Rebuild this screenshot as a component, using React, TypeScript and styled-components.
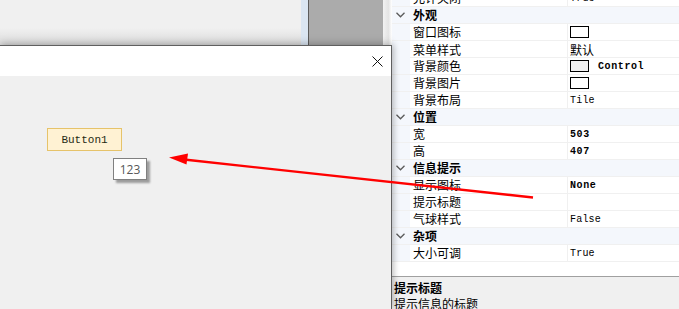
import React from "react";
import styled, { createGlobalStyle } from "styled-components";

const Global = createGlobalStyle`
  html, body { margin: 0; padding: 0; background: #f0f0f0; }
  body { font-family: "Noto Sans CJK SC", "Liberation Sans", sans-serif; }
  #root { width: 679px; height: 309px; }
`;

const Page = styled.div`
  position: relative;
  width: 679px;
  height: 309px;
  overflow: hidden;
  display: flex;
  background: #f0f0f0;
`;

const LeftArea = styled.div`
  width: 392px;
  flex: none;
  display: flex;
  flex-direction: column;
  position: relative;
  z-index: 1;
`;

const Backdrop = styled.div`
  height: 45px;
  flex: none;
  display: flex;
`;

const BackPane = styled.div<{ $w: number; $bg: string; $edge?: string }>`
  width: ${(p) => p.$w}px;
  flex: none;
  background: ${(p) => p.$bg};
  border-left: ${(p) => (p.$edge ? `1px solid ${p.$edge}` : "none")};
  box-sizing: border-box;
`;

const Dialog = styled.div`
  flex: 1;
  display: flex;
  flex-direction: column;
  border-top: 1px solid #5f5f5f;
  border-right: 1px solid #5f5f5f;
  box-shadow: 2px 0 6px rgba(0, 0, 0, 0.18), 0 -3px 8px rgba(0, 0, 0, 0.12);
  background: #f0f0f0;
`;

const TitleBar = styled.div`
  height: 30px;
  flex: none;
  background: #ffffff;
  display: flex;
  align-items: center;
  justify-content: flex-end;
  padding-right: 8px;
`;

const CloseButton = styled.div`
  width: 12px;
  height: 12px;
  display: flex;
  align-items: center;
  justify-content: center;
`;

const Canvas = styled.div`
  flex: 1;
  position: relative;
  background: #f0f0f0;
`;

const DesignButton = styled.div`
  position: absolute;
  left: 47px;
  top: 52px;
  width: 75px;
  height: 23px;
  box-sizing: border-box;
  background: #fff2d3;
  border: 1px solid #e6c36a;
  display: flex;
  align-items: center;
  justify-content: center;
  font-family: "Liberation Mono", monospace;
  font-size: 11px;
  color: #1f2a14;
`;

const Tip = styled.div`
  position: absolute;
  left: 113px;
  top: 82px;
  width: 34px;
  height: 22px;
  box-sizing: border-box;
  background: #ffffff;
  border: 1px solid #808080;
  box-shadow: 3px 3px 2px rgba(0, 0, 0, 0.35);
  display: flex;
  align-items: center;
  justify-content: center;
  font-family: "Open Sans", "Liberation Sans", sans-serif;
  font-size: 12px;
  color: #575757;
`;

const Grid = styled.div`
  flex: 1;
  display: flex;
  flex-direction: column;
  background: #ffffff;
  min-width: 0;
`;

const List = styled.div`
  flex: 1;
  display: flex;
  flex-direction: column;
  margin-top: -10px;
  background: #ffffff;
`;

const Row = styled.div<{ $cat?: boolean }>`
  height: 17px;
  flex: none;
  display: grid;
  grid-template-columns: 18px 158px 1fr;
  box-sizing: border-box;
  background: ${(p) => (p.$cat ? "#f4f7fc" : "#ffffff")};
  border-bottom: 1px solid #f0f0f0;
`;

const Gutter = styled.div`
  background: #f4f7fc;
  display: flex;
  align-items: center;
  padding-left: 4px;
`;

const NameCell = styled.div<{ $cat?: boolean }>`
  grid-column: ${(p) => (p.$cat ? "2 / 4" : "auto")};
  display: flex;
  align-items: center;
  padding-left: 3px;
  font-size: 12px;
  line-height: 16px;
  font-weight: ${(p) => (p.$cat ? 700 : 400)};
  color: #000;
  white-space: nowrap;
  border-right: ${(p) => (p.$cat ? "none" : "1px solid #f0f0f0")};
`;

const ValueCell = styled.div<{ $bold?: boolean }>`
  display: flex;
  align-items: center;
  gap: 9px;
  padding-left: 2px;
  font-family: "Liberation Mono", "Noto Sans CJK SC", monospace;
  font-size: 10px;
  font-weight: ${(p) => (p.$bold ? 700 : 400)};
  letter-spacing: ${(p) => (p.$bold ? "0.6px" : "0.2px")};
  color: #000;
  white-space: nowrap;
`;

const CjkValue = styled.span`
  font-family: "Noto Sans CJK SC", sans-serif;
  font-size: 12px;
  letter-spacing: 0;
`;

const Swatch = styled.span<{ $fill: string }>`
  width: 19px;
  height: 12px;
  box-sizing: border-box;
  border: 1px solid #000;
  background: ${(p) => p.$fill};
  flex: none;
`;

const Help = styled.div`
  height: 33px;
  flex: none;
  box-sizing: border-box;
  border-top: 1px solid #a0a0a0;
  background: #f0f0f0;
  padding: 3px 0 0 2px;
  display: flex;
  flex-direction: column;
  font-size: 12px;
  line-height: 16px;
  color: #000;
`;

const HelpTitle = styled.div`
  font-weight: 700;
`;

const Overlay = styled.svg`
  position: absolute;
  left: 0;
  top: 0;
  width: 679px;
  height: 309px;
  pointer-events: none;
  z-index: 5;
`;

type Item =
  | { kind: "cat"; name: string }
  | {
      kind: "item";
      name: string;
      value?: string;
      bold?: boolean;
      swatch?: string;
      cjk?: boolean;
    };

const rows: Item[] = [
  { kind: "item", name: "允许关闭", value: "True" },
  { kind: "cat", name: "外观" },
  { kind: "item", name: "窗口图标", swatch: "#ffffff" },
  { kind: "item", name: "菜单样式", value: "默认", cjk: true },
  { kind: "item", name: "背景颜色", swatch: "#f0f0f0", value: "Control", bold: true },
  { kind: "item", name: "背景图片", swatch: "#ffffff" },
  { kind: "item", name: "背景布局", value: "Tile" },
  { kind: "cat", name: "位置" },
  { kind: "item", name: "宽", value: "503", bold: true },
  { kind: "item", name: "高", value: "407", bold: true },
  { kind: "cat", name: "信息提示" },
  { kind: "item", name: "显示图标", value: "None", bold: true },
  { kind: "item", name: "提示标题", value: "" },
  { kind: "item", name: "气球样式", value: "False" },
  { kind: "cat", name: "杂项" },
  { kind: "item", name: "大小可调", value: "True" },
];

const Chevron = () => (
  <svg width="9" height="6" viewBox="0 0 9 6">
    <path d="M0.5 0.8 L4.5 4.8 L8.5 0.8" fill="none" stroke="#5a5a5a" strokeWidth="1.3" />
  </svg>
);

export default function App() {
  return (
    <>
      <Global />
      <Page>
        <LeftArea>
          <Backdrop>
            <BackPane
              $w={301}
              $bg="linear-gradient(to bottom, #f0f0f0 0%, #f0f0f0 62%, #dcdcdc 100%)"
            />
            <BackPane $w={7} $bg="#dbe6f2" />
            <BackPane $w={75} $bg="#ababab" $edge="#5c5c5c" />
            <BackPane
              $w={9}
              $bg="linear-gradient(to right, #f2f2f2 0%, #e4e4e4 60%, #ffffff 100%)"
            />
          </Backdrop>
          <Dialog>
            <TitleBar>
              <CloseButton>
                <svg width="11" height="11" viewBox="0 0 11 11">
                  <path d="M0.5 0.5 L10.5 10.5 M10.5 0.5 L0.5 10.5" stroke="#111" strokeWidth="1" fill="none" />
                </svg>
              </CloseButton>
            </TitleBar>
            <Canvas>
              <DesignButton>Button1</DesignButton>
              <Tip>123</Tip>
            </Canvas>
          </Dialog>
        </LeftArea>
        <Grid>
          <List>
            {rows.map((r, i) =>
              r.kind === "cat" ? (
                <Row key={i} $cat>
                  <Gutter>
                    <Chevron />
                  </Gutter>
                  <NameCell $cat>{r.name}</NameCell>
                </Row>
              ) : (
                <Row key={i}>
                  <Gutter />
                  <NameCell>{r.name}</NameCell>
                  <ValueCell $bold={r.bold}>
                    {r.swatch && <Swatch $fill={r.swatch} />}
                    {r.cjk ? <CjkValue>{r.value}</CjkValue> : r.value}
                  </ValueCell>
                </Row>
              )
            )}
          </List>
          <Help>
            <HelpTitle>提示标题</HelpTitle>
            <div>提示信息的标题</div>
          </Help>
        </Grid>
        <Overlay viewBox="0 0 679 309">
          <line x1="533" y1="197.5" x2="184" y2="159.5" stroke="#ff0000" strokeWidth="2.4" />
          <polygon points="169,157.5 188,153.5 186.5,164.5" fill="#ff0000" />
        </Overlay>
      </Page>
    </>
  );
}
